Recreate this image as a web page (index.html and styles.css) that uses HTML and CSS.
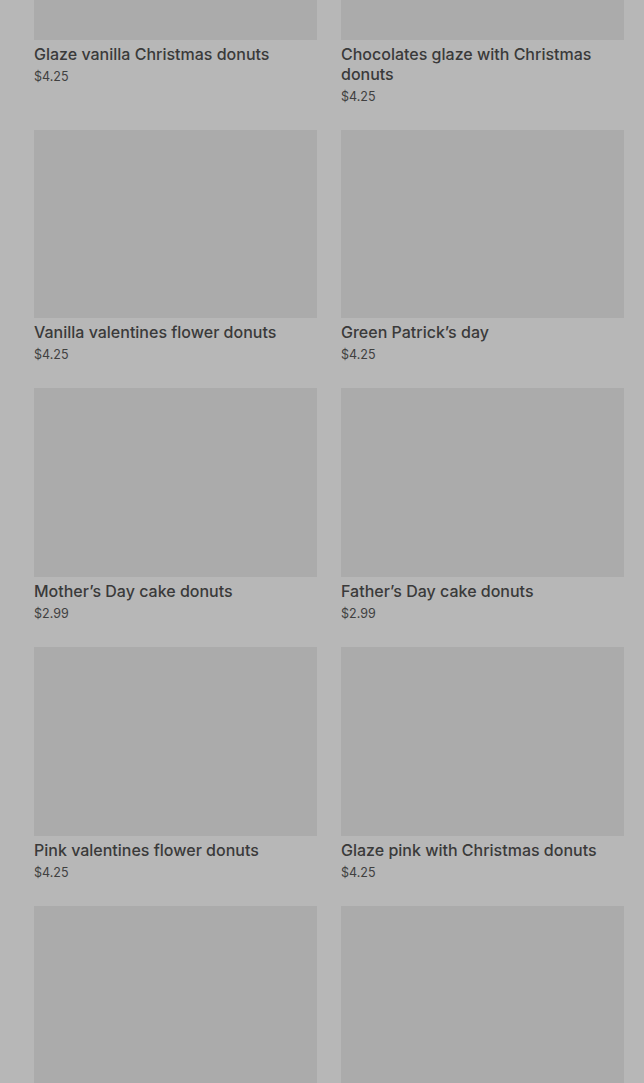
FILE: index.html
```html
<!DOCTYPE html>
<html lang="en">
<head>
    <meta charset="UTF-8">
    <meta name="viewport" content="width=device-width, initial-scale=1.0">
    <title>Donuts</title>
    <link rel="stylesheet" href="styles.css">
</head>
<body>
  <ul class="product-grid">
    <li class="card">
      <div class="card-media"></div>
      <h3 class="card-title">Glaze vanilla Christmas donuts</h3>
      <p class="card-price">$4.25</p>
    </li>
    <li class="card">
      <div class="card-media"></div>
      <h3 class="card-title">Chocolates glaze with Christmas donuts</h3>
      <p class="card-price">$4.25</p>
    </li>
    <li class="card">
      <div class="card-media"></div>
      <h3 class="card-title">Vanilla valentines flower donuts</h3>
      <p class="card-price">$4.25</p>
    </li>
    <li class="card">
      <div class="card-media"></div>
      <h3 class="card-title">Green Patrick’s day</h3>
      <p class="card-price">$4.25</p>
    </li>
    <li class="card">
      <div class="card-media"></div>
      <h3 class="card-title">Mother’s Day cake donuts</h3>
      <p class="card-price">$2.99</p>
    </li>
    <li class="card">
      <div class="card-media"></div>
      <h3 class="card-title">Father’s Day cake donuts</h3>
      <p class="card-price">$2.99</p>
    </li>
    <li class="card">
      <div class="card-media"></div>
      <h3 class="card-title">Pink valentines flower donuts</h3>
      <p class="card-price">$4.25</p>
    </li>
    <li class="card">
      <div class="card-media"></div>
      <h3 class="card-title">Glaze pink with Christmas donuts</h3>
      <p class="card-price">$4.25</p>
    </li>
    <!-- next row, only the pictures reach into view -->
    <li class="card">
      <div class="card-media"></div>
    </li>
    <li class="card">
      <div class="card-media"></div>
    </li>
  </ul>
</body>
</html>
```

FILE: styles.css
```css
body {
    margin: 0;
    background-color: #b7b7b7;
    font-family: Inter, "Liberation Sans", sans-serif;
    color: #3b3b3b;
    overflow: hidden;
}

.product-grid {
    list-style: none;
    margin: -149px 0 0 0; /* page is scrolled down a bit */
    padding: 0 20px 0 34px;
    display: grid;
    grid-template-columns: 1fr 1fr;
    column-gap: 24px;
    row-gap: 23px;
}

.card-media {
    background-color: #ababab;
    aspect-ratio: 3 / 2;
    margin-bottom: 4px;
}

.card-title {
    margin: 0;
    font-size: 16px;
    font-weight: 500;
    line-height: 20px;
    color: #3a3a3a;
}

.card-price {
    margin: 3px 0 0;
    font-size: 12.5px;
    line-height: 20px;
    color: #404040;
}
```
